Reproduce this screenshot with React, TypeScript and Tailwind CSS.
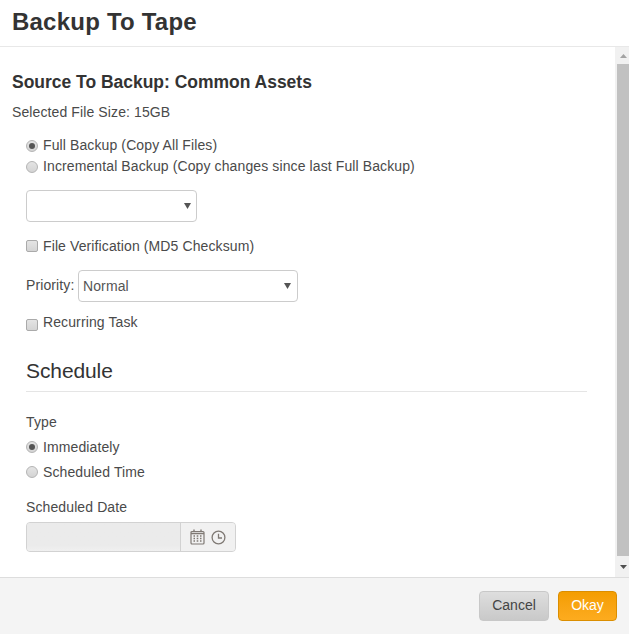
import React from "react";

const Arrow = () => (
  <svg width="7" height="6" viewBox="0 0 7 6" className="shrink-0">
    <path d="M0 0H7L3.5 6Z" fill="#555" />
  </svg>
);

const Radio = ({ checked }: { checked?: boolean }) => (
  <span className="mr-[5px] flex h-3 w-3 shrink-0 items-center justify-center rounded-full border border-[#b4b4b4] bg-gradient-to-b from-[#e4e4e4] to-[#d4d4d4]">
    {checked && <span className="h-[6px] w-[6px] rounded-full bg-[#555]" />}
  </span>
);

const Check = ({ className = "" }: { className?: string }) => (
  <span className={`mr-[5px] h-3 w-3 shrink-0 rounded-[2px] border border-[#aaa] bg-gradient-to-b from-[#e4e4e4] to-[#d4d4d4] ${className}`} />
);

const Calendar = () => (
  <svg width="15" height="16" viewBox="0 0 15 16" fill="none" stroke="#7f7974">
    <rect x="1" y="2.5" width="13" height="12.5" rx="1" strokeWidth="1.2" />
    <path d="M4 0.5V3M11 0.5V3M1 4.5H14" strokeWidth="1.4" />
    <path d="M3.5 7H5M6.7 7H8.3M10 7H11.5M3.5 9.5H5M6.7 9.5H8.3M10 9.5H11.5M3.5 12H5M6.7 12H8.3M10 12H11.5" strokeWidth="1.3" />
  </svg>
);

const Clock = () => (
  <svg width="15" height="15" viewBox="0 0 15 15" fill="none" stroke="#7f7974" strokeWidth="1.3">
    <circle cx="7.5" cy="7.5" r="6.4" />
    <path d="M7.5 3.8V8H11" />
  </svg>
);

export default function App() {
  return (
    <div className="flex h-[634px] w-[629px] flex-col overflow-hidden bg-white font-['Liberation_Sans',Arial,sans-serif] text-[14px] tracking-[0.11px] text-[#4a4a4a]">
      <header className="flex h-[47px] shrink-0 items-center border-b border-[#e8e8e8] pl-3 pb-[2px]">
        <h1 className="text-[24px] leading-[30px] font-bold tracking-[0.22px] text-[#333]">Backup To Tape</h1>
      </header>

      <div className="flex min-h-0 flex-1">
        <main className="min-w-0 flex-1 pl-3 pr-[28px]">
          <h2 className="mt-[25px] text-[17.5px] leading-5 font-bold tracking-[-0.02px] text-[#333]">Source To Backup: Common Assets</h2>
          <p className="mt-[10px] leading-5">Selected File Size: 15GB</p>

          <div className="pl-[14px]">
            <label className="mt-[13px] flex h-[21px] items-center"><Radio checked />Full Backup (Copy All Files)</label>
            <label className="flex h-[21px] items-center"><Radio />Incremental Backup (Copy changes since last Full Backup)</label>

            <div className="mt-[13px] flex h-8 w-[171px] items-center justify-end rounded border border-[#ccc] bg-white pr-[5px]">
              <Arrow />
            </div>

            <label className="mt-[14px] flex h-5 items-center"><Check />File Verification (MD5 Checksum)</label>

            <div className="mt-[14px] flex h-8 items-center">
              <span className="mr-1 w-[48px] shrink-0 -translate-y-px whitespace-nowrap">Priority:</span>
              <div className="flex h-8 w-[220px] items-center justify-between rounded border border-[#ccc] bg-white pl-1 pr-[6px] text-[#555]">
                Normal
                <Arrow />
              </div>
            </div>

            <label className="mt-[10px] flex h-5 items-start leading-5">
              <Check className="mt-[7px]" />Recurring Task
            </label>

            <h3 className="mt-[24px] border-b border-[#e5e5e5] pb-[5px] text-[21px] leading-[30px] font-normal tracking-[-0.1px] text-[#333]">Schedule</h3>

            <p className="mt-5 leading-5">Type</p>
            <label className="mt-[5px] flex h-5 items-center"><Radio checked />Immediately</label>
            <label className="mt-[5px] flex h-5 items-center"><Radio />Scheduled Time</label>

            <p className="mt-[15px] leading-5">Scheduled Date</p>
            <div className="mt-[5px] flex h-[30px] w-[210px] overflow-hidden rounded border border-[#d2d2d2] bg-[#ececec]">
              <div className="flex-1 bg-gradient-to-b from-[#ebebeb] from-80% to-[#f0f0f0]" />
              <div className="flex w-[55px] items-center gap-[6px] border-l border-[#d2d2d2] bg-[#f1f1f1] pl-[9px]">
                <Calendar />
                <Clock />
              </div>
            </div>
          </div>
        </main>

        <aside className="flex w-[14px] shrink-0 flex-col items-end bg-[#f1f1f1]">
          <div className="flex h-[17px] w-full items-center justify-center pl-[2px]">
            <svg width="7" height="4" viewBox="0 0 7 4"><path d="M0 4H7L3.5 0Z" fill="#a3a3a3" /></svg>
          </div>
          <div className="w-3 flex-1 bg-[#c1c1c1]" />
          <div className="flex h-[21px] w-full items-center justify-center pl-[2px]">
            <svg width="7" height="4" viewBox="0 0 7 4"><path d="M0 0H7L3.5 4Z" fill="#505050" /></svg>
          </div>
        </aside>
      </div>

      <footer className="flex h-[57px] shrink-0 items-center justify-end gap-[9px] border-t border-[#ddd] bg-[#f4f4f4] pr-3 pb-[1px]">
        <button className="h-[30px] w-[70px] rounded border border-[#c8c8c8] bg-gradient-to-b from-[#dedede] to-[#c9c9c9] tracking-normal text-[#444]">Cancel</button>
        <button className="h-[30px] w-[59px] rounded border border-[#db8e00] bg-gradient-to-b from-[#f49d00] to-[#fdab1e] tracking-normal text-white">Okay</button>
      </footer>
    </div>
  );
}
